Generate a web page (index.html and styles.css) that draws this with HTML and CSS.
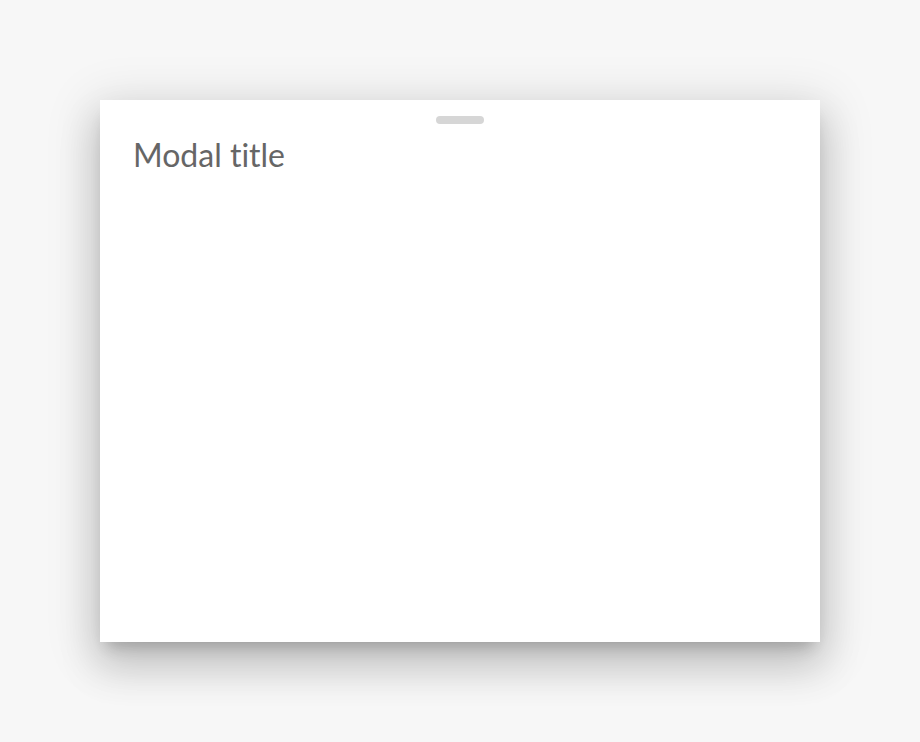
FILE: index.html
```html
<!DOCTYPE html>
<html lang="en">
<head>
<meta charset="utf-8">
<title>Modal</title>
<link rel="stylesheet" href="styles.css">
</head>
<body>
<div class="stage">
  <div class="modal">
    <div class="handle"></div>
    <h2 class="title">Modal title</h2>
  </div>
</div>
</body>
</html>
```
FILE: styles.css
```css
html, body {
  margin: 0;
  height: 100%;
  background: #f7f7f7;
}
.stage {
  padding: 100px;
}
.modal {
  box-sizing: border-box;
  width: 720px;
  height: 542px;
  background: #fff;
  box-shadow: 0 24px 38px 3px rgba(0,0,0,0.14), 0 9px 46px 8px rgba(0,0,0,0.12), 0 11px 15px -7px rgba(0,0,0,0.2);
  display: flex;
  flex-direction: column;
  padding: 16px 33px 0;
}
.handle {
  align-self: center;
  width: 48px;
  height: 8px;
  border-radius: 4px;
  background: #d6d6d6;
}
.title {
  margin: 11px 0 0;
  font-family: Lato, sans-serif;
  font-weight: 400;
  font-size: 32px;
  line-height: 40px;
  color: #666;
  font-variant-ligatures: none;
  font-feature-settings: "liga" 0, "dlig" 0;
}
```
